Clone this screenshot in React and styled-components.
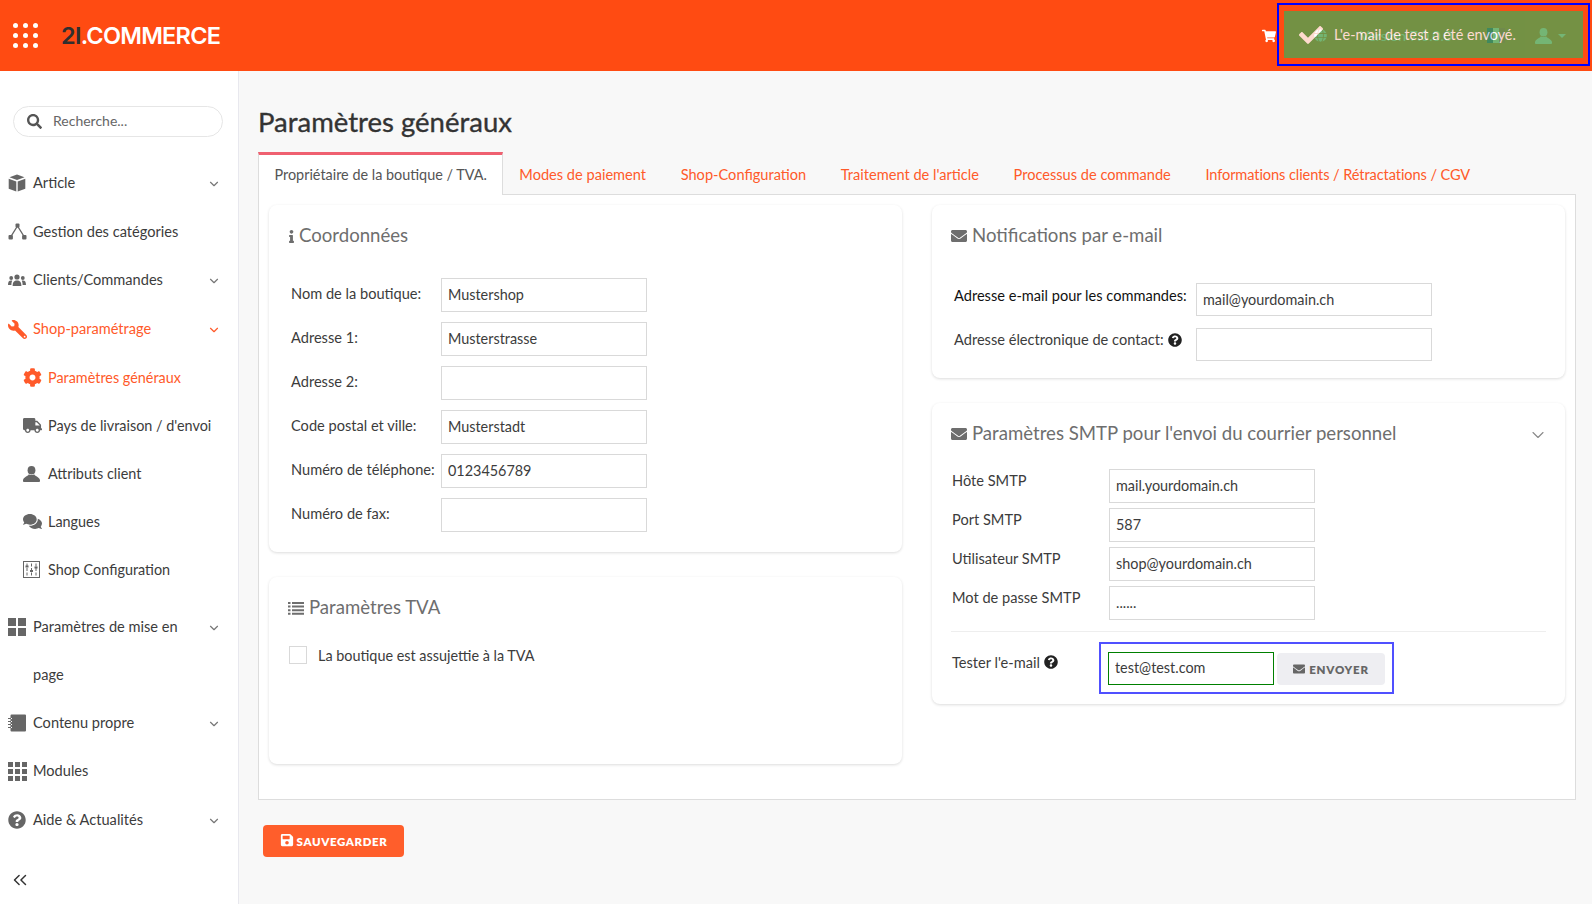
import styled, { createGlobalStyle } from "styled-components";
import { ChevronDown, ChevronsLeft } from "lucide-react";
import {
    FaCheck,
    FaCog,
    FaComments,
    FaEnvelope,
    FaGlobe,
    FaInfo,
    FaQuestionCircle,
    FaSave,
    FaSearch,
    FaShoppingCart,
    FaTruck,
    FaWrench,
} from "react-icons/fa";

const orange = "#ff4b12";
const accent = "#ff5a2a";
const font = `"Lato", "Noto Sans", sans-serif`;

const GlobalStyle = createGlobalStyle`
    html, body {
        margin: 0;
        padding: 0;
        background: #f8f8f8;
    }
    body {
        font-family: ${font};
        color: #3c3c3c;
        overflow: hidden;
    }
    * {
        box-sizing: border-box;
    }
`;

const Page = styled.div`
    width: 1592px;
    height: 904px;
    display: flex;
    flex-direction: column;
    position: relative;
    overflow: hidden;
`;

const TopBar = styled.header`
    height: 71px;
    flex: none;
    background: ${orange};
    display: flex;
    align-items: center;
    padding: 0 26px 0 13px;
`;

const DotsGrid = styled.div`
    display: grid;
    grid-template-columns: repeat(3, 5px);
    gap: 5px;
    margin-right: 23px;
    span {
        width: 5px;
        height: 5px;
        border-radius: 50%;
        background: #fff;
    }
`;

const Logo = styled.div`
    font-family: "Inter", sans-serif;
    font-weight: 600;
    font-size: 23.5px;
    letter-spacing: -0.75px;
    color: #fff;
    b {
        font-weight: 600;
        color: #2f2f2f;
    }
`;

const TopRight = styled.div`
    margin-left: auto;
    display: flex;
    align-items: center;
    color: #fff;
`;

const CartSlot = styled.span`
    display: flex;
    margin-right: 38px;
    font-size: 14px;
`;

const VersionText = styled.span`
    font-size: 14px;
    margin: 0 34px 0 33px;
    width: 93px;
    white-space: nowrap;
`;

const Flag = styled.span`
    width: 18px;
    height: 15px;
    margin-right: 30px;
    display: flex;
    span {
        flex: 1;
    }
`;

const Stripe = styled.span`
    background: ${(p) => p.$color};
`;

const Caret = styled.span`
    width: 0;
    height: 0;
    margin-left: 6px;
    border-left: 4px solid transparent;
    border-right: 4px solid transparent;
    border-top: 4px solid #fff;
`;

const ToastFrame = styled.div`
    position: absolute;
    left: 1277px;
    top: 3px;
    width: 313px;
    height: 63px;
    border: 2px solid #0000ff;
    padding: 6px 5px;
`;

const Toast = styled.div`
    height: 100%;
    background: #51a351;
    opacity: 0.8;
    color: #fff;
    display: flex;
    align-items: center;
    padding-left: 15px;
    font-size: 14.4px;
    gap: 11px;
`;

const Body = styled.div`
    flex: 1;
    display: flex;
    min-height: 0;
`;

const Sidebar = styled.aside`
    width: 239px;
    flex: none;
    background: #fff;
    border-right: 1px solid #e8e8ee;
    padding-top: 35px;
`;

const SearchBox = styled.div`
    width: 210px;
    height: 31px;
    margin-left: 13px;
    border: 1px solid #e6e6e6;
    border-radius: 16px;
    display: flex;
    align-items: center;
    padding-left: 13px;
    gap: 11px;
    color: #555;
    font-size: 14px;
    input {
        border: 0;
        outline: 0;
        width: 140px;
        padding: 0 0 2px;
        font: inherit;
        color: #555;
        background: none;
    }
    input::placeholder {
        color: #666;
        opacity: 1;
    }
`;

const Nav = styled.nav`
    margin-top: 22px;
`;

const NavRow = styled.div`
    display: flex;
    align-items: flex-start;
    padding-left: ${(p) => (p.$sub ? "23px" : "8px")};
    padding-right: 17px;
    font-size: ${(p) => (p.$sub ? "14.4px" : "14.6px")};
    line-height: 48px;
    min-height: ${(p) => (p.$sub ? "48px" : "48.7px")};
    color: ${(p) => (p.$active ? accent : "#3c3c3c")};
    svg.chev {
        margin-top: 18px;
        margin-left: auto;
        flex: none;
        color: ${(p) => (p.$active ? accent : "#777")};
    }
`;

const NavIcon = styled.span`
    width: 25px;
    height: 48px;
    flex: none;
    display: flex;
    align-items: center;
    color: ${(p) => (p.$active ? accent : "#666")};
    font-size: 19px;
    svg {
        transform: ${(p) => (p.$flip ? "scaleX(-1)" : "none")};
    }
`;

const NavLabel = styled.span`
    max-width: ${(p) => (p.$sub ? "190px" : "160px")};
`;

const SubGroup = styled.div`
    padding-bottom: 9px;
`;

const Collapse = styled.div`
    margin: 24px 0 0 9px;
    color: #333;
    display: flex;
`;

const Main = styled.main`
    flex: 1;
    padding: 0 16px 0 19px;
    background: #f8f8f8;
    min-width: 0;
`;

const Title = styled.h1`
    margin: 32px 0 0;
    height: 38px;
    line-height: 38px;
    font-size: 27.5px;
    font-weight: 400;
    -webkit-text-stroke: 0.35px #333;
    color: #333;
`;

const Tabs = styled.div`
    display: flex;
    margin-top: 11px;
    height: 42px;
    align-items: stretch;
`;

const Tab = styled.div`
    padding: 0 16px;
    margin-right: ${(p) => (p.$active ? "0" : "2.6px")};
    font-size: 14.6px;
    letter-spacing: ${(p) => (p.$tight ? "-0.1px" : "0")};
    line-height: 45px;
    white-space: nowrap;
    color: ${(p) => (p.$active ? "#555" : accent)};
    ${(p) =>
        p.$active &&
        `
        background: #fff;
        border-top: 3px solid #ef6070;
        border-left: 1px solid #ddd;
        border-right: 1px solid #ddd;
        font-size: 14.4px;
        line-height: 39px;
        height: 43px;
        position: relative;
        z-index: 1;
        padding: 0 15.5px;
    `}
`;

const Panel = styled.section`
    height: 606px;
    background: #fff;
    border: 1px solid #ddd;
    padding: 10px 10px;
    display: grid;
    grid-template-columns: 633px 633px;
    column-gap: 30px;
    align-content: start;
`;

const Column = styled.div`
    display: flex;
    flex-direction: column;
    gap: 25px;
`;

const Card = styled.div`
    height: ${(p) => p.$h}px;
    background: #fff;
    border-radius: 8px;
    box-shadow: 0 1px 3px rgba(0, 0, 0, 0.14);
    padding: 19px ${(p) => p.$padRight || 20}px 0 19px;
`;

const CardTitle = styled.h3`
    margin: 0;
    height: 22px;
    line-height: 22px;
    display: flex;
    align-items: center;
    gap: 5px;
    font-size: 18.6px;
    font-weight: 400;
    color: #6e6e6e;
    svg.chev {
        margin: 3px -2px 0 auto;
        color: #888;
    }
`;

const TitleIcon = styled.span`
    display: flex;
    justify-content: center;
    width: ${(p) => p.$w || 16}px;
    font-size: ${(p) => p.$size || 16}px;
    color: #6e6e6e;
    position: relative;
    top: 1px;
    svg {
        flex: none;
    }
`;

const Form = styled.div`
    display: flex;
    flex-direction: column;
    gap: ${(p) => p.$gap}px;
    margin-top: ${(p) => p.$top}px;
    padding-left: ${(p) => p.$left || 0}px;
`;

const FormRow = styled.label`
    display: flex;
    align-items: center;
    font-size: 14.6px;
    color: ${(p) => (p.$dark ? "#111" : "#3c3c3c")};
`;

const FieldName = styled.span`
    width: ${(p) => p.$w}px;
    flex: none;
    white-space: nowrap;
    display: flex;
    align-items: center;
    gap: 4px;
    position: relative;
    top: ${(p) => p.$lift || -2}px;
`;

const Input = styled.input`
    width: ${(p) => p.$w || 206}px;
    height: ${(p) => p.$h || 34}px;
    border: 1px solid ${(p) => (p.$ok ? "#008000" : "#d9d9d9")};
    background: #fff;
    padding: 0 6px 1px;
    font: inherit;
    font-size: 14.4px;
    color: #3c3c3c;
    outline: 0;
    border-radius: 0;
`;

const Divider = styled.hr`
    border: 0;
    border-top: 1px solid #eee;
    margin: 11px 0 0;
`;

const TestRow = styled.div`
    display: flex;
    align-items: center;
    margin-top: 10px;
    padding-left: 1px;
    font-size: 14.6px;
`;

const TestBox = styled.div`
    width: 295px;
    height: 52px;
    border: 2px solid #5050ff;
    display: flex;
    align-items: center;
    padding: 0 6px 0 7px;
    gap: 3px;
`;

const SmallButton = styled.button`
    height: 32px;
    width: 108px;
    position: relative;
    top: 1px;
    border: 0;
    border-radius: 4px;
    background: #eeeef2;
    color: #666;
    font-family: ${font};
    font-size: 11.5px;
    font-weight: 800;
    letter-spacing: 0.8px;
    display: flex;
    align-items: center;
    justify-content: center;
    gap: 4px;
`;

const VatRow = styled.label`
    display: flex;
    align-items: center;
    margin: 28px 0 0 1px;
    font-size: 14.4px;
    gap: 11px;
    span.box {
        width: 18px;
        height: 18px;
        border: 1px solid #d9d9d9;
        background: #fff;
    }
`;

const SaveButton = styled.button`
    margin: 25px 0 0 5px;
    width: 141px;
    height: 32px;
    border: 0;
    border-radius: 4px;
    background: #ff5e2b;
    color: #fff;
    font-family: ${font};
    font-size: 11.5px;
    font-weight: 800;
    letter-spacing: 0.6px;
    display: flex;
    align-items: center;
    justify-content: center;
    gap: 3px;
    svg {
        position: relative;
        top: -1px;
    }
`;

function CubeIcon() {
    return (
        <svg width="18" height="18" viewBox="0 0 18 18" fill="currentColor">
            <path d="M9 .5l7.5 2.8L9 6.1 1.5 3.3z" />
            <path d="M.7 4.7l7.6 2.9v10L.7 14.7zM17.3 4.7L9.7 7.6v10l7.600-2.900z" />
        </svg>
    );
}

function CategoryIcon() {
    return (
        <svg width="19" height="17" viewBox="0 0 19 17" fill="currentColor">
            <path d="M9.5 3 2.600 14M9.5 3l6.900 11" stroke="currentColor" strokeWidth="1.4" fill="none" />
            <rect x="7.5" y="0.5" width="4" height="4" rx="1" />
            <rect x="0.5" y="12" width="4.4" height="4.4" rx="1" />
            <rect x="14.1" y="12" width="4.4" height="4.4" rx="1" />
        </svg>
    );
}

function PeopleIcon() {
    return (
        <svg width="18" height="12" viewBox="0 0 18 12" fill="currentColor">
            <circle cx="9" cy="3" r="2.6" />
            <path d="M4.6 12c0-4 1.600-5.600 4.400-5.600s4.400 1.600 4.400 5.600z" />
            <circle cx="3.2" cy="4" r="1.9" />
            <path d="M0 11c0-3 .9-4.400 3.200-4.400.4 0 .7 0 1 .1C3.600 7.800 3.400 9.200 3.400 11z" />
            <circle cx="14.8" cy="4" r="1.9" />
            <path d="M18 11c0-3-.9-4.400-3.200-4.400-.4 0-.7 0-1 .1.600 1.100.800 2.500.800 4.300z" />
        </svg>
    );
}

function NotebookIcon() {
    return (
        <svg width="18" height="18" viewBox="0 0 18 18" fill="currentColor">
            <path d="M3.5 0.5H17a1 1 0 0 1 1 1v15a1 1 0 0 1-1 1H3.5a1 1 0 0 1-1-1V14H4v-1H2.5v-2H4v-1H2.5V8H4V7H2.5V5H4V4H2.5V1.500a1 1 0 0 1 1-1z" />
            <path d="M0 4h3v1H0zM0 7h3v1H0zM0 10h3v1H0zM0 13h3v1H0z" />
        </svg>
    );
}

function SlidersBoxIcon() {
    return (
        <svg width="17" height="17" viewBox="0 0 17 17" fill="none" stroke="currentColor" strokeWidth="1">
            <rect x="0.5" y="0.5" width="16" height="16" />
            <path d="M4 2.5v12M8.5 2.5v12M13 2.500v12" strokeDasharray="3 1.5" />
            <path d="M2.5 5.5h3M7 10h3M11.5 6.5h3" strokeWidth="1.8" />
        </svg>
    );
}

function UserIcon({ w = 17, h = 16 }) {
    return (
        <svg width={w} height={h} viewBox="0 0 17 16" fill="currentColor">
            <ellipse cx="8.5" cy="4.3" rx="3.9" ry="4.3" />
            <path d="M5.8 8.2c1.600 1.200 3.800 1.200 5.400 0 .5 2 4.800 2.200 5.800 5.800.2.800-.2 2-1 2H1c-.8 0-1.200-1.200-1-2 1-3.600 5.300-3.800 5.800-5.800z" />
        </svg>
    );
}

function ListIcon() {
    return (
        <svg width="16" height="13" viewBox="0 0 16 13" fill="currentColor">
            <path d="M0 0h2.500v2H0zM0 3.600h2.500v2H0zM0 7.200h2.500v2H0zM0 10.800h2.500v2H0z" />
            <path d="M4 0h12v2H4zM4 3.600h12v2H4zM4 7.200h12v2H4zM4 10.800h12v2H4z" />
        </svg>
    );
}

function SquaresIcon({ n, size, gap, w }) {
    const cells = [];
    for (let r = 0; r < n; r++) {
        for (let c = 0; c < n; c++) {
            cells.push(<rect key={`${r}-${c}`} x={c * (size + gap)} y={r * (size + gap)} width={size} height={size} />);
        }
    }
    return (
        <svg width={w} height={n * size + (n - 1) * gap} fill="currentColor">
            {cells}
        </svg>
    );
}

const LayoutIcon = () => <SquaresIcon n={2} size={8} gap={2} w={18} />;
const GridIcon = () => <SquaresIcon n={3} size={5} gap={2} w={19} />;
const QuestionIcon = () => <FaQuestionCircle size={18} />;

const topItems = [
    { label: "Article", Icon: CubeIcon, chevron: true },
    { label: "Gestion des catégories", Icon: CategoryIcon },
    { label: "Clients/Commandes", Icon: PeopleIcon, chevron: true },
];

const subItems = [
    { label: "Paramètres généraux", Icon: FaCog, active: true },
    { label: "Pays de livraison / d'envoi", Icon: FaTruck },
    { label: "Attributs client", Icon: UserIcon },
    { label: "Langues", Icon: FaComments },
    { label: "Shop Configuration", Icon: SlidersBoxIcon },
];

const bottomItems = [
    { label: "Paramètres de mise en page", Icon: LayoutIcon, chevron: true },
    { label: "Contenu propre", Icon: NotebookIcon, chevron: true },
    { label: "Modules", Icon: GridIcon },
    { label: "Aide & Actualités", Icon: QuestionIcon, chevron: true },
];

const tabs = [
    "Modes de paiement",
    "Shop-Configuration",
    "Traitement de l'article",
    "Processus de commande",
];

const shopFields = [
    ["Nom de la boutique:", "Mustershop"],
    ["Adresse 1:", "Musterstrasse"],
    ["Adresse 2:", ""],
    ["Code postal et ville:", "Musterstadt"],
    ["Numéro de téléphone:", "0123456789"],
    ["Numéro de fax:", ""],
];

const smtpFields = [
    ["Hôte SMTP", "mail.yourdomain.ch"],
    ["Port SMTP", "587"],
    ["Utilisateur SMTP", "shop@yourdomain.ch"],
    ["Mot de passe SMTP", "......"],
];

function SideRow({ item, sub }) {
    const { Icon, label, chevron, active, flip } = item;
    return (
        <NavRow $sub={sub} $active={active}>
            <NavIcon $active={active} $flip={flip}>
                <Icon />
            </NavIcon>
            <NavLabel $sub={sub}>{label}</NavLabel>
            {chevron && <ChevronDown className="chev" size={14} />}
        </NavRow>
    );
}

export default function App() {
    return (
        <Page>
            <GlobalStyle />
            <TopBar>
                <DotsGrid>
                    {Array.from({ length: 9 }).map((_, i) => (
                        <span key={i} />
                    ))}
                </DotsGrid>
                <Logo>
                    <b>2I</b>.COMMERCE
                </Logo>
                <TopRight>
                    <CartSlot>
                        <FaShoppingCart />
                    </CartSlot>
                    <FaGlobe size={13} />
                    <VersionText>Version 7.0.0.0</VersionText>
                    <Flag>
                        <Stripe $color="#002395" />
                        <Stripe $color="#fff" />
                        <Stripe $color="#ed2939" />
                    </Flag>
                    <UserIcon />
                    <Caret />
                </TopRight>
            </TopBar>
            <ToastFrame>
                <Toast>
                    <FaCheck size={24} />
                    L'e-mail de test a été envoyé.
                </Toast>
            </ToastFrame>
            <Body>
                <Sidebar>
                    <SearchBox>
                        <FaSearch size={15} />
                        <input placeholder="Recherche..." readOnly />
                    </SearchBox>
                    <Nav>
                        {topItems.map((item) => (
                            <SideRow key={item.label} item={item} />
                        ))}
                        <SideRow
                            item={{
                                label: "Shop-paramétrage",
                                Icon: FaWrench,
                                chevron: true,
                                active: true,
                                flip: true,
                            }}
                        />
                        <SubGroup>
                            {subItems.map((item) => (
                                <SideRow key={item.label} item={item} sub />
                            ))}
                        </SubGroup>
                        {bottomItems.map((item) => (
                            <SideRow key={item.label} item={item} />
                        ))}
                    </Nav>
                    <Collapse>
                        <ChevronsLeft size={22} strokeWidth={1.6} />
                    </Collapse>
                </Sidebar>
                <Main>
                    <Title>Paramètres généraux</Title>
                    <Tabs>
                        <Tab $active>Propriétaire de la boutique / TVA.</Tab>
                        {tabs.map((t) => (
                            <Tab key={t}>{t}</Tab>
                        ))}
                        <Tab $tight>Informations clients / Rétractations / CGV</Tab>
                    </Tabs>
                    <Panel>
                        <Column>
                            <Card $h={347}>
                                <CardTitle>
                                    <TitleIcon $w={6} $size={13}>
                                        <FaInfo />
                                    </TitleIcon>
                                    Coordonnées
                                </CardTitle>
                                <Form $gap={10} $top={32} $left={3}>
                                    {shopFields.map(([name, value]) => (
                                        <FormRow key={name}>
                                            <FieldName $w={150}>{name}</FieldName>
                                            <Input defaultValue={value} />
                                        </FormRow>
                                    ))}
                                </Form>
                            </Card>
                            <Card $h={187}>
                                <CardTitle>
                                    <TitleIcon>
                                        <ListIcon />
                                    </TitleIcon>
                                    Paramètres TVA
                                </CardTitle>
                                <VatRow>
                                    <span className="box" />
                                    La boutique est assujettie à la TVA
                                </VatRow>
                            </Card>
                        </Column>
                        <Column>
                            <Card $h={173}>
                                <CardTitle>
                                    <TitleIcon>
                                        <FaEnvelope />
                                    </TitleIcon>
                                    Notifications par e-mail
                                </CardTitle>
                                <Form $gap={12} $top={37} $left={3}>
                                    <FormRow $dark>
                                        <FieldName $w={242} $lift={-4}>
                                            Adresse e-mail pour les commandes:
                                        </FieldName>
                                        <Input $w={236} $h={33} defaultValue="mail@yourdomain.ch" />
                                    </FormRow>
                                    <FormRow>
                                        <FieldName $w={242} $lift={-5}>
                                            Adresse électronique de contact:
                                            <FaQuestionCircle size={14} color="#222" />
                                        </FieldName>
                                        <Input $w={236} $h={33} />
                                    </FormRow>
                                </Form>
                            </Card>
                            <Card $h={301} $padRight={19}>
                                <CardTitle>
                                    <TitleIcon>
                                        <FaEnvelope />
                                    </TitleIcon>
                                    Paramètres SMTP pour l'envoi du courrier personnel
                                    <ChevronDown className="chev" size={20} strokeWidth={1.3} />
                                </CardTitle>
                                <Form $gap={5} $top={25} $left={1}>
                                    {smtpFields.map(([name, value]) => (
                                        <FormRow key={name}>
                                            <FieldName $w={157} $lift={-6}>
                                                {name}
                                            </FieldName>
                                            <Input defaultValue={value} />
                                        </FormRow>
                                    ))}
                                </Form>
                                <Divider />
                                <TestRow>
                                    <FieldName $w={147} $lift={-6}>
                                        Tester l'e-mail
                                        <FaQuestionCircle size={14} color="#222" />
                                    </FieldName>
                                    <TestBox>
                                        <Input $w={166} $h={33} $ok defaultValue="test@test.com" />
                                        <SmallButton>
                                            <FaEnvelope size={12} />
                                            ENVOYER
                                        </SmallButton>
                                    </TestBox>
                                </TestRow>
                            </Card>
                        </Column>
                    </Panel>
                    <SaveButton>
                        <FaSave size={14} />
                        SAUVEGARDER
                    </SaveButton>
                </Main>
            </Body>
        </Page>
    );
}
